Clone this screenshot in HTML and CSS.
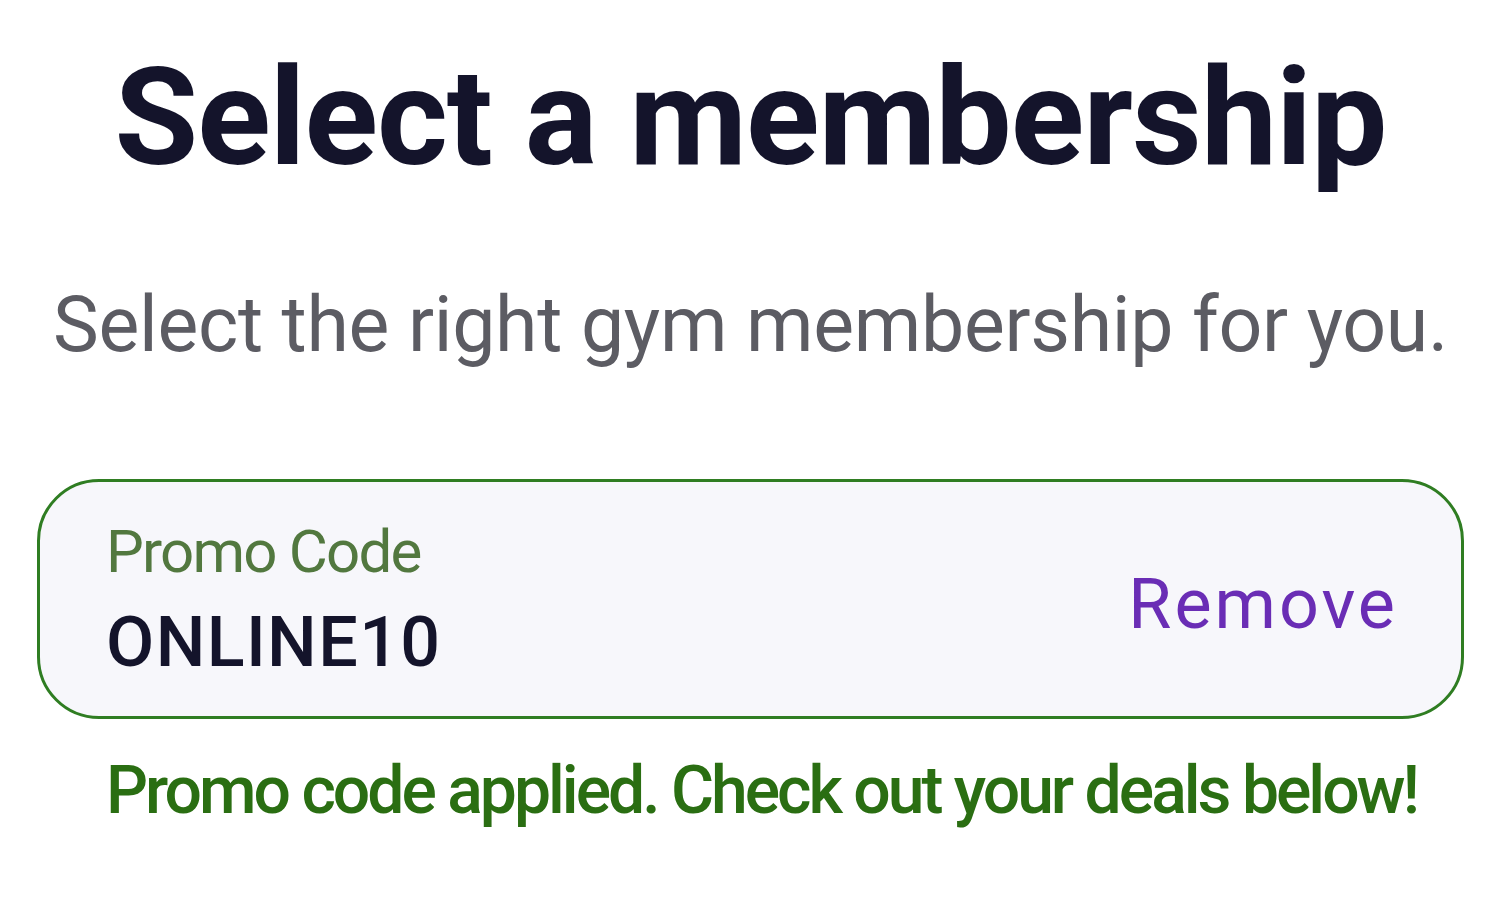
FILE: index.html
```html
<!DOCTYPE html>
<html lang="en">
<head>
<meta charset="utf-8">
<title>Select a membership</title>
<link rel="stylesheet" href="styles.css">
</head>
<body>
<main class="page">
  <h1 class="title">Select a membership</h1>
  <p class="subtitle">Select the right gym membership for you.</p>
  <div class="promo">
    <div class="promo-field">
      <span class="promo-label">Promo Code</span>
      <span class="promo-value">ONLINE10</span>
    </div>
    <button class="promo-remove" type="button">Remove</button>
  </div>
  <p class="promo-message">Promo code applied. Check out your deals below!</p>
</main>
</body>
</html>
```
FILE: styles.css
```css
html, body {
  margin: 0;
  padding: 0;
  background: #ffffff;
}
body {
  font-family: Roboto, "Liberation Sans", sans-serif;
  width: 1500px;
  height: 923px;
  overflow: hidden;
}
.page {
  display: flex;
  flex-direction: column;
  align-items: stretch;
  padding: 50px 36px 0 37px;
}
.title {
  margin: 0;
  font-size: 136px;
  line-height: 1;
  font-weight: 700;
  color: #14142b;
  text-align: center;
  letter-spacing: -1px;
  white-space: nowrap;
}
.subtitle {
  margin: 101px 0 0;
  font-size: 77px;
  line-height: 1;
  font-weight: 400;
  color: #5c5c63;
  text-align: center;
  letter-spacing: -0.3px;
  white-space: nowrap;
}
.promo {
  margin-top: 115px;
  height: 240px;
  box-sizing: border-box;
  border: 3px solid #2f7d22;
  border-radius: 62px;
  background: #f7f7fb;
  display: flex;
  align-items: center;
  justify-content: space-between;
  padding: 0 63px 0 66px;
}
.promo-field {
  display: flex;
  flex-direction: column;
  gap: 25px;
}
.promo-label {
  font-size: 60px;
  line-height: 1;
  color: #52783f;
  letter-spacing: -1.8px;
}
.promo-value {
  font-size: 70px;
  line-height: 1;
  font-weight: 500;
  color: #14142b;
  letter-spacing: 1.4px;
}
.promo-remove {
  border: 0;
  background: none;
  padding: 0;
  margin-top: 10px;
  font-family: inherit;
  font-size: 70px;
  line-height: 1;
  color: #6a2db5;
  letter-spacing: 3px;
  cursor: pointer;
}
.promo-message {
  margin: 39px 0 0 69px;
  font-size: 66px;
  line-height: 1;
  font-weight: 500;
  color: #2a6e12;
  letter-spacing: -3px;
  white-space: nowrap;
}
```
